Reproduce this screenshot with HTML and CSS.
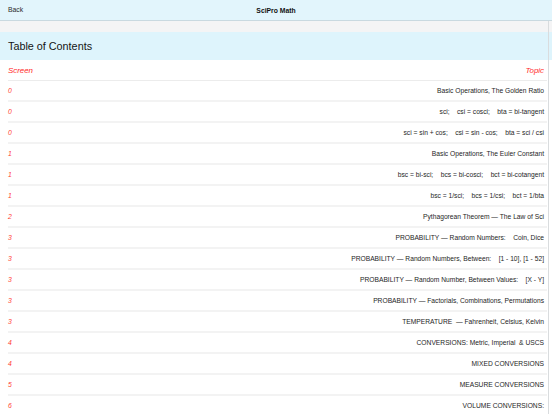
FILE: index.html
```html
<!DOCTYPE html>
<html>
<head>
<meta charset="utf-8">
<link rel="stylesheet" href="styles.css">
</head>
<body>
<div class="navbar">
  <span class="back">Back</span>
  <span class="title">SciPro Math</span>
</div>
<div class="content">
  <div class="scroll-track"></div>
  <div class="gap"></div>
  <div class="section-title">Table of Contents</div>
  <div class="row header"><span class="num">Screen</span><span class="topic">Topic</span></div>
  <div class="row"><span class="num">0</span><span class="text">Basic Operations, The Golden Ratio</span></div>
  <div class="row"><span class="num">0</span><span class="text">sci;    csi = cosci;    bta = bi-tangent</span></div>
  <div class="row"><span class="num">0</span><span class="text">sci = sin + cos;    csi = sin - cos;    bta = sci / csi</span></div>
  <div class="row"><span class="num">1</span><span class="text">Basic Operations, The Euler Constant</span></div>
  <div class="row"><span class="num">1</span><span class="text">bsc = bi-sci;    bcs = bi-cosci;    bct = bi-cotangent</span></div>
  <div class="row"><span class="num">1</span><span class="text">bsc = 1/sci;    bcs = 1/csi;    bct = 1/bta</span></div>
  <div class="row"><span class="num">2</span><span class="text">Pythagorean Theorem — The Law of Sci</span></div>
  <div class="row"><span class="num">3</span><span class="text">PROBABILITY — Random Numbers:    Coin, Dice</span></div>
  <div class="row"><span class="num">3</span><span class="text">PROBABILITY — Random Numbers, Between:    [1 - 10], [1 - 52]</span></div>
  <div class="row"><span class="num">3</span><span class="text">PROBABILITY — Random Number, Between Values:    [X - Y]</span></div>
  <div class="row"><span class="num">3</span><span class="text">PROBABILITY — Factorials, Combinations, Permutations</span></div>
  <div class="row"><span class="num">3</span><span class="text">TEMPERATURE  — Fahrenheit, Celsius, Kelvin</span></div>
  <div class="row"><span class="num">4</span><span class="text">CONVERSIONS: Metric, Imperial  &amp; USCS</span></div>
  <div class="row"><span class="num">4</span><span class="text">MIXED CONVERSIONS</span></div>
  <div class="row"><span class="num">5</span><span class="text">MEASURE CONVERSIONS</span></div>
  <div class="row"><span class="num">6</span><span class="text">VOLUME CONVERSIONS:</span></div>
</div>
</body>
</html>
```
FILE: styles.css
```css
html, body {
  margin: 0;
  padding: 0;
  height: 414px;
  overflow: hidden;
  background: #ffffff;
  font-family: "Liberation Sans", Arial, sans-serif;
  color: #1c1c1e;
}
.navbar {
  height: 20px;
  background: #e2f5fc;
  border-bottom: 1px solid #c9d9e0;
  display: flex;
  align-items: center;
  justify-content: center;
  position: relative;
}
.back {
  position: absolute;
  left: 8px;
  top: 6px;
  font-size: 6.8px;
  color: #2a2a2a;
}
.title {
  font-size: 6.8px;
  font-weight: bold;
  color: #111;
}
.content {
  position: relative;
}
.scroll-track {
  position: absolute;
  left: 548px;
  top: 0;
  bottom: 0;
  width: 1px;
  background: #d9dcde;
}
.gap {
  height: 11px;
  background: #f4f4f5;
}
.section-title {
  height: 28px;
  background: #def4fc;
  display: flex;
  align-items: center;
  padding-left: 8px;
  font-size: 10.8px;
  color: #141414;
}
.row {
  height: 19px;
  margin-left: 8px;
  margin-right: 5px;
  padding-right: 3px;
  border-bottom: 2px solid #f3f3f3;
  display: flex;
  align-items: center;
  justify-content: space-between;
}
.row.header {
  height: 20px;
  border-bottom-width: 1px;
  border-bottom-color: #ececec;
}
.num {
  font-style: italic;
  color: #ff3b30;
  font-size: 6.8px;
}
.header .num, .header .topic {
  font-size: 7.9px;
  font-style: italic;
  color: #ff2a2a;
}
.text {
  font-size: 6.7px;
  color: #1e1e1e;
  white-space: pre;
}
```
